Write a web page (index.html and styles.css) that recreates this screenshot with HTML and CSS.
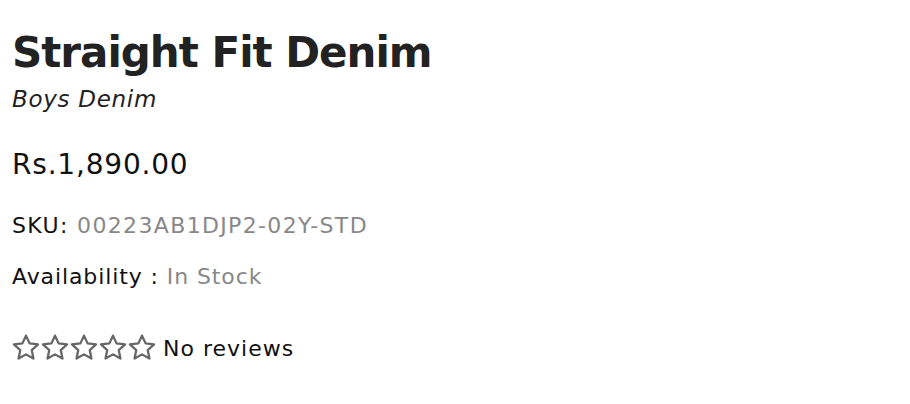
FILE: index.html
```html
<!DOCTYPE html>
<html>
<head>
<meta charset="utf-8">
<link rel="stylesheet" href="styles.css">
</head>
<body>
<div class="product">
  <h1 class="title">Straight Fit Denim</h1>
  <div class="vendor">Boys Denim</div>
  <div class="price">Rs.1,890.00</div>
  <div class="meta sku">SKU: <span class="muted">00223AB1DJP2-02Y-STD</span></div>
  <div class="meta avail">Availability : <span class="muted">In Stock</span></div>
  <div class="reviews">
    <span class="stars">
      <svg class="star" viewBox="0 0 24 24"><path d="M12 1.5L15.29 8.67L23.13 9.58L17.33 14.93L18.88 22.67L12 18.8L5.12 22.67L6.67 14.93L0.87 9.58L8.71 8.67Z"/></svg>
      <svg class="star" viewBox="0 0 24 24"><path d="M12 1.5L15.29 8.67L23.13 9.58L17.33 14.93L18.88 22.67L12 18.8L5.12 22.67L6.67 14.93L0.87 9.58L8.71 8.67Z"/></svg>
      <svg class="star" viewBox="0 0 24 24"><path d="M12 1.5L15.29 8.67L23.13 9.58L17.33 14.93L18.88 22.67L12 18.8L5.12 22.67L6.67 14.93L0.87 9.58L8.71 8.67Z"/></svg>
      <svg class="star" viewBox="0 0 24 24"><path d="M12 1.5L15.29 8.67L23.13 9.58L17.33 14.93L18.88 22.67L12 18.8L5.12 22.67L6.67 14.93L0.87 9.58L8.71 8.67Z"/></svg>
      <svg class="star" viewBox="0 0 24 24"><path d="M12 1.5L15.29 8.67L23.13 9.58L17.33 14.93L18.88 22.67L12 18.8L5.12 22.67L6.67 14.93L0.87 9.58L8.71 8.67Z"/></svg>
    </span>
    <span class="review-text">No reviews</span>
  </div>
</div>
</body>
</html>
```
FILE: styles.css
```css
html, body {
  margin: 0;
  padding: 0;
  background: #fff;
}
body {
  font-family: "DejaVu Sans", "Open Sans", sans-serif;
}
.product {
  padding: 28px 12px 0 12px;
}
.title {
  margin: 0;
  font-size: 42px;
  line-height: 50px;
  font-weight: 700;
  color: #222;
  letter-spacing: -1px;
}
.vendor {
  margin-top: 6px;
  font-size: 23px;
  line-height: 30px;
  font-style: italic;
  color: #222;
  letter-spacing: 0.7px;
}
.price {
  margin-top: 33px;
  font-size: 28px;
  line-height: 36px;
  color: #111;
  letter-spacing: 0.8px;
}
.meta {
  font-size: 22px;
  line-height: 30px;
  color: #111;
  letter-spacing: 0.9px;
}
.sku {
  margin-top: 28px;
  letter-spacing: 1.35px;
}
.avail {
  margin-top: 21px;
}
.muted {
  color: #888;
}
.reviews {
  margin-top: 42px;
  display: flex;
  align-items: flex-start;
  gap: 8px;
  height: 30px;
}
.stars {
  display: flex;
  gap: 3px;
  padding-left: 1px;
}
.star {
  width: 26px;
  height: 26px;
  fill: none;
  stroke: #666;
  stroke-width: 2.1;
  stroke-linejoin: round;
  overflow: visible;
}
.review-text {
  font-size: 22px;
  line-height: 30px;
  color: #111;
  letter-spacing: 1px;
}
```
